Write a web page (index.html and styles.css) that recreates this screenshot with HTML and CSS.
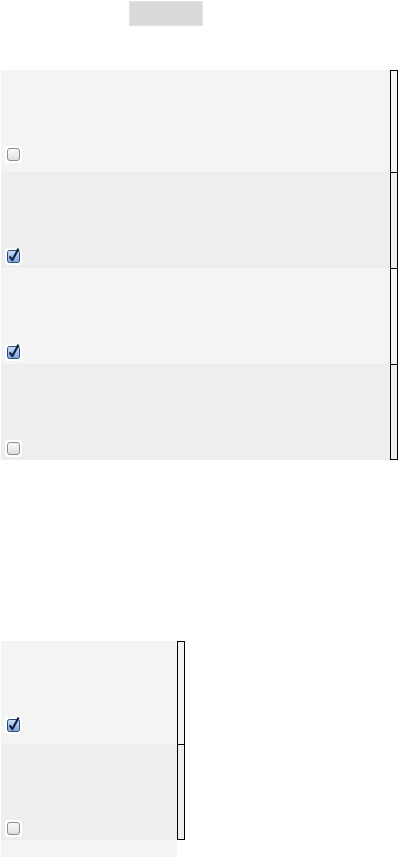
FILE: index.html
```html
<!DOCTYPE html>
<html>

<head>
    <meta name="viewport" content="width=device-width, initial-scale=1">
    <link rel="stylesheet" href="styles.css">
</head>

<body>
    <div class="toolbar">
        <div class="btn"></div>
    </div>

    <div class="list wide">
        <div class="row first odd">
            <div class="cell"><span class="check"><svg width="13" height="13" viewBox="0 0 13 13"><defs><linearGradient id="g0" x1="0" y1="0" x2="0" y2="1"><stop offset="0" stop-color="#fbfbfb"/><stop offset="1" stop-color="#dedede"/></linearGradient></defs><rect x="0.5" y="0.5" width="12" height="12" rx="2.5" fill="url(#g0)" stroke="#8c8c8c"/></svg></span></div>
            <div class="side"></div>
        </div>
        <div class="row even">
            <div class="cell"><span class="check"><svg width="13" height="13" viewBox="0 0 13 13" overflow="visible"><defs><linearGradient id="g1" x1="0" y1="0" x2="0" y2="1"><stop offset="0" stop-color="#cfe0f6"/><stop offset="1" stop-color="#7fa4d8"/></linearGradient></defs><rect x="0.5" y="0.5" width="12" height="12" rx="2" fill="url(#g1)" stroke="#2a4a7c"/><path d="M2.6 6.4 L5.4 10 L11.6 -1.4" fill="none" stroke="#0f2347" stroke-width="2.2" stroke-linejoin="round"/></svg></span></div>
            <div class="side"></div>
        </div>
        <div class="row odd">
            <div class="cell"><span class="check"><svg width="13" height="13" viewBox="0 0 13 13" overflow="visible"><rect x="0.5" y="0.5" width="12" height="12" rx="2" fill="url(#g1)" stroke="#2a4a7c"/><path d="M2.6 6.4 L5.4 10 L11.6 -1.4" fill="none" stroke="#0f2347" stroke-width="2.2" stroke-linejoin="round"/></svg></span></div>
            <div class="side"></div>
        </div>
        <div class="row even last">
            <div class="cell"><span class="check"><svg width="13" height="13" viewBox="0 0 13 13"><rect x="0.5" y="0.5" width="12" height="12" rx="2.5" fill="url(#g0)" stroke="#8c8c8c"/></svg></span></div>
            <div class="side"></div>
        </div>
    </div>

    <div class="list narrow">
        <div class="row first odd">
            <div class="cell"><span class="check"><svg width="13" height="13" viewBox="0 0 13 13" overflow="visible"><rect x="0.5" y="0.5" width="12" height="12" rx="2" fill="url(#g1)" stroke="#2a4a7c"/><path d="M2.6 6.4 L5.4 10 L11.6 -1.4" fill="none" stroke="#0f2347" stroke-width="2.2" stroke-linejoin="round"/></svg></span></div>
            <div class="side"></div>
        </div>
        <div class="row even last">
            <div class="cell"><span class="check"><svg width="13" height="13" viewBox="0 0 13 13"><rect x="0.5" y="0.5" width="12" height="12" rx="2.5" fill="url(#g0)" stroke="#8c8c8c"/></svg></span></div>
            <div class="side"></div>
        </div>
        <div class="row odd tail">
            <div class="cell"></div>
        </div>
    </div>
</body>

</html>
```

FILE: styles.css
```css
html,
body {
    margin: 0;
    background-color: white;
    height: 100%;
    overflow: hidden;
    font-family: "Liberation Sans", Arial, sans-serif;
}

.toolbar {
    padding-top: 1px;
    padding-left: 129px;
}

.btn {
    width: 74px;
    height: 25px;
    background-color: #dadada;
    box-sizing: border-box;
    border: 1px solid #e2e2e2;
}

.list {
    margin-left: 1px;
}

.wide {
    width: 397px;
    margin-top: 44px;
}

.narrow {
    width: 184px;
    margin-top: 181px;
}

/* one row: content cell + bordered cell on the right */
.row {
    display: flex;
    height: 96px;
}

.row.first {
    height: 102px;
}

.narrow .row.first {
    height: 103px;
}

.odd {
    background-color: #f4f4f4;
}

.even {
    background-color: #eeeeee;
}

.cell {
    flex: 1;
    display: flex;
    align-items: flex-end;
    padding: 0 0 3px 4px;
}

.row.first .cell {
    padding-bottom: 9px;
}

.narrow .row.first .cell {
    padding-bottom: 10px;
}

.tail {
    width: 176px;
}

.check {
    display: block;
    width: 13px;
    height: 13px;
    padding: 2px;
    background-color: white;
    border-radius: 3px;
}

.check svg {
    display: block;
}

.side {
    width: 8px;
    box-sizing: border-box;
    border: 1px solid #000;
    border-bottom: none;
}

.last .side {
    border-bottom: 1px solid #000;
}
```
